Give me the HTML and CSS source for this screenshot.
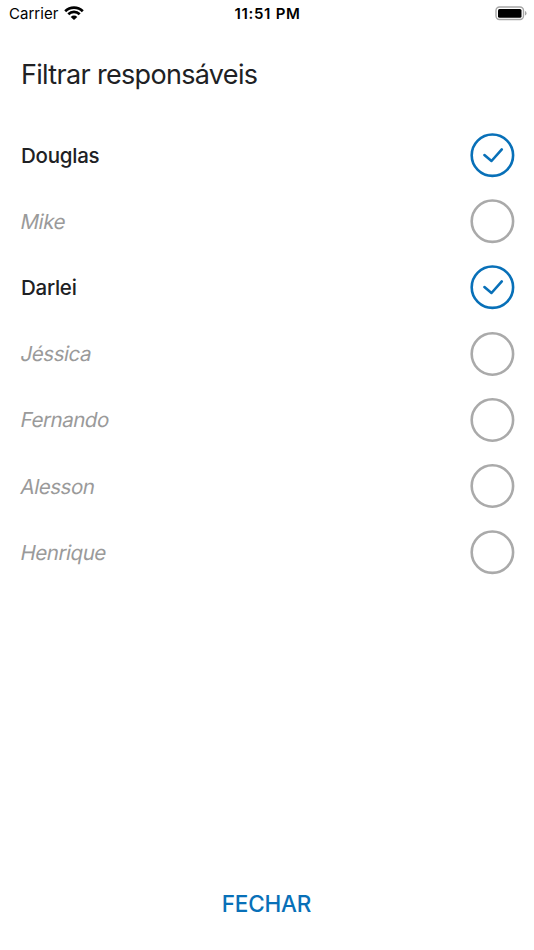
FILE: index.html
```html
<!DOCTYPE html>
<html lang="pt-BR">
<head>
<meta charset="utf-8">
<title>Filtrar responsáveis</title>
<link rel="stylesheet" href="styles.css">
</head>
<body>
<div class="status">
  <div class="carrier"><span>Carrier</span>
    <svg class="wifi" viewBox="0 0 20 14"><path d="M1.2 5.2a12.7 12.7 0 0 1 17.6 0M4.3 8.2a8.3 8.3 0 0 1 11.4 0" fill="none" stroke="#000" stroke-width="2.7"/><path d="M10 14L6.700 10.900a4.700 4.700 0 0 1 6.600 0z"/></svg>
  </div>
  <span class="time">11:51 PM</span>
  <svg class="battery" viewBox="0 0 32 15"><rect x="1" y="1" width="27.500" height="12.500" rx="3.500" fill="none" stroke="#a6a6a6" stroke-width="1.400"/><rect x="3" y="3" width="23.500" height="8.700" rx="1.500"/><path d="M30 5v4.500q1.500-.5 1.500-2.250t-1.500-2.250" fill="#a6a6a6"/></svg>
</div>
<main>
  <h1>Filtrar responsáveis</h1>
  <ul class="people">
    <li class="selected"><span>Douglas</span><svg class="radio" viewBox="-.4 -.2 44 44"><circle cx="22" cy="22" r="20.700"/><path d="M14 21.900l7.100 5.900L31.400 16.200"/></svg></li>
    <li><span>Mike</span><svg class="radio" viewBox="-.4 -.2 44 44"><circle cx="22" cy="22" r="20.700"/></svg></li>
    <li class="selected"><span>Darlei</span><svg class="radio" viewBox="-.4 -.2 44 44"><circle cx="22" cy="22" r="20.700"/><path d="M14 21.900l7.100 5.900L31.400 16.200"/></svg></li>
    <li><span>Jéssica</span><svg class="radio" viewBox="-.4 0 44 44"><circle cx="22" cy="22" r="20.700"/></svg></li>
    <li><span>Fernando</span><svg class="radio" viewBox="-.4 0 44 44"><circle cx="22" cy="22" r="20.700"/></svg></li>
    <li><span>Alesson</span><svg class="radio" viewBox="-.4 0 44 44"><circle cx="22" cy="22" r="20.700"/></svg></li>
    <li><span>Henrique</span><svg class="radio" viewBox="-.4 -.2 44 44"><circle cx="22" cy="22" r="20.700"/></svg></li>
  </ul>
</main>
<button class="close">FECHAR</button>
</body>
</html>
```
FILE: styles.css
```css
* { box-sizing: border-box; }
body { margin: 0; height: 950px; display: flex; flex-direction: column; background: #fff; color: #202124; font-family: Inter, "Liberation Sans", sans-serif; overflow: hidden; }
.status { height: 28px; display: grid; grid-template-columns: 1fr auto 1fr; align-items: center; padding: 0 7px 0 9px; color: #000; font-size: 15px; line-height: 28px; }
.carrier { display: flex; align-items: center; gap: 6px; letter-spacing: .03px; }
.wifi { width: 20px; height: 14px; margin-top: -2px; }
.time { font-weight: 600; letter-spacing: .7px; margin-right: 1px; }
.battery { width: 32px; height: 15px; justify-self: end; margin-top: -1px; }
main { flex: 1; padding: 30px 20px 0 21px; }
h1 { margin: 0; font-size: 27px; line-height: 34px; font-weight: 400; letter-spacing: -.68px; }
.people { list-style: none; margin: 30px 0 0; padding: 0; }
.people li { height: 66.200px; display: flex; align-items: center; justify-content: space-between; font-size: 20.500px; letter-spacing: -.45px; color: #9a9a9a; }
.people span { transform: skewX(-11deg); }
.people .selected { color: #202124; font-weight: 500; letter-spacing: -.25px; }
.people .selected span { transform: none; }
.radio { width: 44px; height: 44px; overflow: visible; fill: none; stroke: #aaa; stroke-width: 2.600; stroke-linecap: round; stroke-linejoin: round; }
.selected .radio { stroke: #0870b8; }
.close { height: 44px; margin: 0 1px 25px 0; padding: 0; border: 0; background: none; color: #0870b8; font: 500 22.500px Inter, sans-serif; letter-spacing: -.2px; }
```
